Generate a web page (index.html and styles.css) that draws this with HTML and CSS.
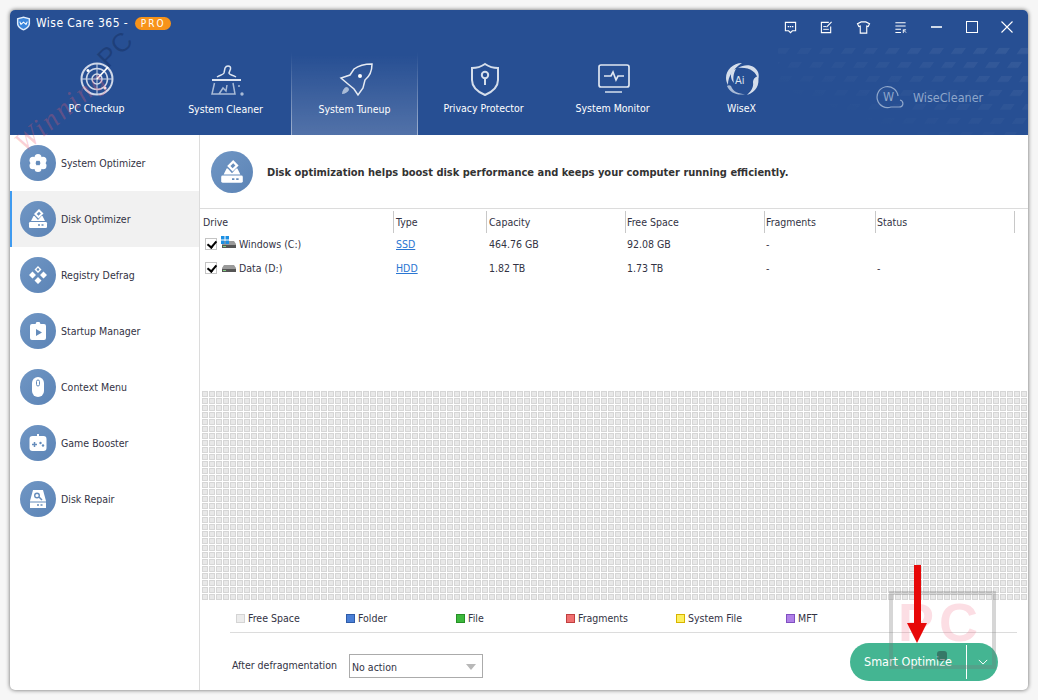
FILE: index.html
```html
<!DOCTYPE html>
<html lang="en">

<head>
    <meta charset="UTF-8">
    <meta name="viewport" content="width=device-width, initial-scale=1.0">
    <title>Wise Care 365</title>
    <link rel="stylesheet" href="styles.css">
</head>

<body>
    <div class="window">
        <header class="topbar">
            <svg class="topbar-pattern" viewBox="0 0 250 90">
                <defs>
                    <pattern id="dots" width="22" height="14" patternUnits="userSpaceOnUse" patternTransform="skewX(-35)">
                        <path d="M3 3h11v6H3z" fill="#fff"/>
                    </pattern>
                    <linearGradient id="fade" x1="0" y1="1" x2="1" y2="0">
                        <stop offset="0.2" stop-color="#fff" stop-opacity="0"/>
                        <stop offset="1" stop-color="#fff" stop-opacity="0.07"/>
                    </linearGradient>
                    <mask id="fadeMask"><rect width="250" height="90" fill="url(#fade)"/></mask>
                </defs>
                <rect width="250" height="90" fill="url(#dots)" mask="url(#fadeMask)"/>
            </svg>
            <div class="title-row">
                <svg class="logo" viewBox="0 0 16 16"><path d="M8 .500l7 2v5.500c0 3.500-3 6-7 7.500-4-1.500-7-4-7-7.500V2.500z" fill="#e3eefb"/><path d="M2.500 3.500L8 2l5.500 1.500V8c0 2.700-2.500 4.600-5.500 5.900C5 12.600 2.500 10.700 2.500 8z" fill="#3b86dc"/><path d="M4 6l1.300 3L8 6.500 10.700 9 12 6" fill="none" stroke="#fff" stroke-width="1.100"/></svg>
                <span class="app-name">Wise Care 365 -</span>
                <span class="pro-badge">PRO</span>
                <div class="win-tools">
                    <svg class="tool" viewBox="0 0 14 14"><path d="M1.500 1.500h11v9H9l-2 2-2-2H1.500z" fill="none" stroke="#fff" stroke-width="1.200"/><path d="M4 6h1.500M6.300 6h1.500M8.600 6h1.500" stroke="#fff" stroke-width="1.500"/></svg>
                    <svg class="tool" viewBox="0 0 14 14"><path d="M9.500 1.500h-8v11h10V6" fill="none" stroke="#fff" stroke-width="1.200"/><path d="M3.500 6h3M3.500 9h6" stroke="#fff"/><path d="M7 6.500l5.500-5.500" stroke="#fff" stroke-width="1.200"/></svg>
                    <svg class="tool tool-wide" viewBox="0 0 16 14"><path d="M5.500 1h5l4 2-1.500 3-1.500-.5v7.500h-7V5.500L3 6 1.500 3z" fill="none" stroke="#fff" stroke-width="1.200"/></svg>
                    <svg class="tool" viewBox="0 0 14 14"><path d="M1.500 2h11M1.500 5.500h11M1.500 9h6M1.500 12.500h6" stroke="#fff" stroke-width="1.100"/><path d="M10 13V9.500h3M10 9.500l3 3" fill="none" stroke="#fff"/></svg>
                    <span class="win-min"></span>
                    <span class="win-max"></span>
                    <svg class="win-close" viewBox="0 0 12 12"><path d="M.5.500l11 11M11.500.500l-11 11" stroke="#fff" stroke-width="1.100"/></svg>
                </div>
            </div>
            <nav class="tabs">
                <div class="tab">
                    <svg class="tab-icon" viewBox="0 0 36 36" fill="none" stroke="#cfd8e8" stroke-width="1.500">
                        <circle cx="18" cy="18" r="15.500" stroke-width="2"/><circle cx="18" cy="18" r="10.500"/><circle cx="18" cy="18" r="5"/>
                        <path d="M18 3v30M3 18h30" stroke-width="1"/><path d="M18 18L29 6" stroke="#fff" stroke-width="1.800"/>
                        <circle cx="26" cy="27" r="1.500" fill="#fff" stroke="none"/><circle cx="9" cy="9.500" r="1.500" fill="#fff" stroke="none"/>
                    </svg>
                    <span class="tab-label">PC Checkup</span>
                </div>
                <div class="tab">
                    <svg class="tab-icon" viewBox="0 0 36 36" fill="none" stroke="#dfe6f1" stroke-width="1.500">
                        <path d="M9 16c3-2 6-2 7-4l1-5q1-2 3-2 3 0 2.500 3L21 12c0 2 4 2 7 4"/><path d="M4 19h29" stroke-width="1.800"/>
                        <path d="M6.500 22L4 33h23l-2-11M11 33l4-6 3 3 1-6" stroke="#a9bbd6"/><circle cx="34" cy="33" r="1.700" fill="#a9bbd6" stroke="none"/><circle cx="31" cy="25" r="1" fill="#a9bbd6" stroke="none"/>
                    </svg>
                    <span class="tab-label label-low">System Cleaner</span>
                </div>
                <div class="tab tab-active">
                    <svg class="tab-icon" viewBox="0 0 36 36" fill="none" stroke="#e6ebf3" stroke-width="1.500">
                        <path d="M35 3c-7 0-14 2-18 5l-4 6-9 3 7 6 6 5 4 6 5-7 2-8c5-4 7-10 7-16z"/><circle cx="23" cy="15" r="2" fill="#fff" stroke="none"/>
                        <path d="M9 26c-2 1-4 4-4 7 3 0 6-2 7-4 0-2-1-3-3-3z" fill="#a9bbd6" stroke="none"/>
                    </svg>
                    <span class="tab-label label-low">System Tuneup</span>
                </div>
                <div class="tab">
                    <svg class="tab-icon" viewBox="0 0 36 36" fill="none" stroke="#d5deeb" stroke-width="2">
                        <path d="M19 3c3 2 8 4 13 4v12c0 7-6 12-13 15C12 31 6 26 6 19V7c5 0 10-2 13-4z"/><circle cx="19" cy="14" r="3.200"/><path d="M19 17v7"/>
                    </svg>
                    <span class="tab-label">Privacy Protector</span>
                </div>
                <div class="tab">
                    <svg class="tab-icon" viewBox="0 0 36 36" fill="none" stroke="#dfe6f1" stroke-width="1.700">
                        <rect x="4" y="4" width="30" height="22" rx="2"/><path d="M9 15h7l2-4 3 8 2-4h6"/><path d="M10 31h17" stroke-width="2" stroke="#a9bbd6"/>
                    </svg>
                    <span class="tab-label">System Monitor</span>
                </div>
                <div class="tab">
                    <svg class="tab-icon" viewBox="0 0 36 36" fill="#d5deeb">
                        <path d="M18 2C9 2 2 9 2 17c0 3 1 5 2 7 0-9 5-16 14-22z"/>
                        <path d="M14 7c8-5 17-3 20 4 1 3 1 5 0 7-2-7-8-12-20-11z"/>
                        <path d="M34 15c2 9-2 16-11 19 3-3 7-7 6-13 0-3 2-5 5-6z"/>
                        <path d="M3 25c3 7 11 10 18 8-6 0-12-2-14-8-1-1-3-1-4 0z" fill="#a9bbd6"/>
                        <path d="M8 9c-2 5-1 10 2 13-1-4-1-9 2-14z"/>
                    </svg>
                    <span class="ai-mark">Ai</span>
                    <span class="tab-label">WiseX</span>
                </div>
            </nav>
            <div class="brand">
                <svg class="brand-icon" viewBox="0 0 28 26" fill="none" stroke="#8ea6ca" stroke-width="1.200"><path d="M22 12A10.500 10.500 0 1 0 15 23h8c5 0 5-6 1-7"/></svg>
                <span class="brand-w">W</span>
                <span class="brand-name">WiseCleaner</span>
            </div>
        </header>

        <div class="content">
            <aside class="sidebar">
                <div class="side-item">
                    <span class="side-icon"><svg viewBox="0 0 20 20" fill="#fff"><circle cx="10" cy="4.500" r="3.500"/><circle cx="15" cy="7.300" r="3.500"/><circle cx="15" cy="12.700" r="3.500"/><circle cx="10" cy="15.500" r="3.500"/><circle cx="5" cy="12.700" r="3.500"/><circle cx="5" cy="7.300" r="3.500"/><circle cx="10" cy="10" r="2.200" fill="#658cbb"/></svg></span>
                    <span>System Optimizer</span>
                </div>
                <div class="side-item side-active">
                    <span class="side-icon"><svg viewBox="0 0 20 20"><path d="M11 0l4.500 4.500L10.500 9.500 6 5z" fill="#fff"/><path d="M11 2.700l1.800 1.800-2.300 2.300-1.800-1.800z" fill="#658cbb"/><path d="M5.500 7L3 12h14l-2.500-5-1 0-3.500 4-3.500-4z" fill="#fff"/><rect x="1" y="13" width="18" height="6" rx="1.200" fill="#fff"/><path d="M10 16h2M13.500 16h2" stroke="#658cbb" stroke-width="1.500"/></svg></span>
                    <span>Disk Optimizer</span>
                </div>
                <div class="side-item">
                    <span class="side-icon"><svg viewBox="0 0 20 20" fill="#fff"><path d="M10 1l3.500 3.500L10 8 6.500 4.500zM4.500 6.500L8 10l-3.500 3.500L1 10zM15.500 6.500L19 10l-3.500 3.500L12 10zM10 12l3.500 3.500L10 19l-3.500-3.500z"/><circle cx="10" cy="4.500" r="1.300" fill="#658cbb"/></svg></span>
                    <span>Registry Defrag</span>
                </div>
                <div class="side-item">
                    <span class="side-icon"><svg viewBox="0 0 20 20"><path d="M4 3h3.500l1-2h3l1 2H16a2 2 0 0 1 2 2v12a2 2 0 0 1-2 2H4a2 2 0 0 1-2-2V5a2 2 0 0 1 2-2z" fill="#fff"/><path d="M8 8l6 3.500L8 15z" fill="#658cbb"/></svg></span>
                    <span>Startup Manager</span>
                </div>
                <div class="side-item">
                    <span class="side-icon"><svg viewBox="0 0 20 20"><rect x="4" y="0" width="12" height="20" rx="6" fill="#fff"/><rect x="8.500" y="3" width="3" height="6" rx="1.500" fill="none" stroke="#658cbb"/></svg></span>
                    <span>Context Menu</span>
                </div>
                <div class="side-item">
                    <span class="side-icon"><svg viewBox="0 0 20 20"><path d="M9 1h2v2h4.500a3 3 0 0 1 3 3v9a3 3 0 0 1-3 3h-11a3 3 0 0 1-3-3V6a3 3 0 0 1 3-3H9z" fill="#fff"/><path d="M4 11.500h5M6.500 9v5" stroke="#658cbb" stroke-width="1.500"/><circle cx="12.500" cy="10" r="1.200" fill="#658cbb"/><circle cx="15" cy="12.500" r="1.200" fill="#658cbb"/></svg></span>
                    <span>Game Booster</span>
                </div>
                <div class="side-item">
                    <span class="side-icon"><svg viewBox="0 0 20 20"><path d="M5 1h10l3 11v7H2v-7z" fill="#fff"/><circle cx="9" cy="6.500" r="2.300" fill="none" stroke="#658cbb" stroke-width="1.400"/><path d="M11 8l3 3" stroke="#658cbb" stroke-width="1.500"/><path d="M2 13h16" stroke="#658cbb"/><path d="M9 16h2M12.500 16h2" stroke="#658cbb" stroke-width="1.500"/></svg></span>
                    <span>Disk Repair</span>
                </div>
            </aside>

            <main class="main">
                <div class="intro">
                    <span class="side-icon intro-icon"><svg viewBox="0 0 20 20"><path d="M11 0l4.500 4.500L10.500 9.500 6 5z" fill="#fff"/><path d="M11 2.700l1.800 1.800-2.300 2.300-1.800-1.800z" fill="#658cbb"/><path d="M5.500 7L3 12h14l-2.500-5-1 0-3.500 4-3.500-4z" fill="#fff"/><rect x="1" y="13" width="18" height="6" rx="1.200" fill="#fff"/><path d="M10 16h2M13.500 16h2" stroke="#658cbb" stroke-width="1.500"/></svg></span>
                    <b class="intro-text">Disk optimization helps boost disk performance and keeps your computer running efficiently.</b>
                </div>

                <div class="drives">
                    <div class="drive-row drive-head">
                        <span class="col col-drive">Drive</span>
                        <span class="col col-type">Type</span>
                        <span class="col col-cap">Capacity</span>
                        <span class="col col-free">Free Space</span>
                        <span class="col col-frag">Fragments</span>
                        <span class="col col-status">Status</span>
                    </div>
                    <div class="drive-row">
                        <span class="col col-drive drive-name">
                            <span class="check"></span>
                            <span class="disk-wrap">
                                <svg class="win-flag" viewBox="0 0 8 8" fill="#1c8fe3"><path d="M0 0h3.500v3.500H0zM4.500 0H8v3.500H4.500zM0 4.500h3.500V8H0zM4.500 4.500H8V8H4.500z"/></svg>
                                <svg class="disk" viewBox="0 0 14 7"><path d="M2 0h10l2 3v4H0V3z" fill="#9a9a9a"/><path d="M0 4h14v3H0z" fill="#555"/><path d="M1 5.500h3" stroke="#7fd07f"/></svg>
                            </span>
                            Windows (C:)
                        </span>
                        <a class="col col-type link">SSD</a>
                        <span class="col col-cap">464.76 GB</span>
                        <span class="col col-free">92.08 GB</span>
                        <span class="col col-frag">-</span>
                        <span class="col col-status"></span>
                    </div>
                    <div class="drive-row">
                        <span class="col col-drive drive-name">
                            <span class="check"></span>
                            <span class="disk-wrap">
                                <svg class="disk" viewBox="0 0 14 7"><path d="M2 0h10l2 3v4H0V3z" fill="#9a9a9a"/><path d="M0 4h14v3H0z" fill="#555"/><path d="M1 5.500h3" stroke="#7fd07f"/></svg>
                            </span>
                            Data (D:)
                        </span>
                        <a class="col col-type link">HDD</a>
                        <span class="col col-cap">1.82 TB</span>
                        <span class="col col-free">1.73 TB</span>
                        <span class="col col-frag">-</span>
                        <span class="col col-status">-</span>
                    </div>
                </div>

                <div class="cluster-map"></div>

                <div class="legend">
                    <span class="key"><i class="swatch sw-free"></i>Free Space</span>
                    <span class="key"><i class="swatch sw-folder"></i>Folder</span>
                    <span class="key"><i class="swatch sw-file"></i>File</span>
                    <span class="key"><i class="swatch sw-frag"></i>Fragments</span>
                    <span class="key"><i class="swatch sw-sys"></i>System File</span>
                    <span class="key"><i class="swatch sw-mft"></i>MFT</span>
                </div>

                <div class="actions">
                    <span class="after-label">After defragmentation</span>
                    <div class="select">No action<i class="select-arrow"></i></div>
                    <div class="optimize-btn">
                        <span class="optimize-text">Smart Optimize</span>
                        <span class="optimize-more"><svg viewBox="0 0 12 7" width="10" height="6"><path d="M1 1l5 5 5-5" fill="none" stroke="#fff" stroke-width="1.200"/></svg></span>
                    </div>
                </div>
            </main>
        </div>

        <!-- overlays added on top of the screenshot -->
        <span class="mark-script">Winning</span>
        <span class="mark-pc">PC</span>
        <div class="mark-box"><span class="mark-letters">PC</span></div>
        <i class="mark-spot"></i>
        <svg class="red-arrow" viewBox="0 0 20 78"><path d="M7 0h7v58h6L10 78 0 58h7z" fill="#e70808"/></svg>
    </div>
</body>

</html>
```
FILE: styles.css
```css
* {
    box-sizing: border-box;
}

html,
body {
    margin: 0;
    height: 100%;
}

body {
    background: #f6f6f6;
    padding: 10px;
    font-family: "DejaVu Sans", "Liberation Sans", sans-serif;
    font-stretch: condensed;
    font-size: 10.5px;
    color: #333344;
    overflow: hidden;
}

.window {
    position: relative;
    width: 1018px;
    height: 680px;
    display: flex;
    flex-direction: column;
    background: white;
    border-radius: 5px;
    box-shadow: 0 0 4px rgba(0, 0, 0, 0.6);
    overflow: hidden;
}

/* Top bar */
.topbar {
    position: relative;
    height: 125px;
    background: #274f93;
    color: white;
    flex: none;
}

.topbar-pattern {
    position: absolute;
    right: 0;
    bottom: 0;
    width: 250px;
    height: 90px;
}

.title-row {
    position: relative;
    display: flex;
    align-items: center;
    height: 28px;
    padding: 0 15px 2px 6px;
}

.logo {
    width: 15px;
    height: 15px;
    margin-right: 5px;
}

.app-name {
    font-size: 12px;
    letter-spacing: 0.45px;
}

.pro-badge {
    margin-left: 7px;
    width: 36px;
    height: 13px;
    line-height: 13px;
    background: #f7931a;
    border-radius: 7px;
    text-align: center;
    font-size: 10px;
    letter-spacing: 2px;
}

.win-tools {
    margin-left: auto;
    margin-top: 8px;
    display: flex;
    align-items: center;
}

.tool {
    width: 13px;
    height: 13px;
    margin-right: 23px;
}

.tool-wide {
    width: 15px;
}

.win-min {
    width: 11px;
    height: 2px;
    background: #cfd9e8;
    margin: 0 24px 0 1px;
}

.win-max {
    width: 12px;
    height: 12px;
    border: 1px solid white;
    margin-right: 23px;
}

.win-close {
    width: 12px;
    height: 12px;
}

.tabs {
    position: relative;
    display: flex;
    padding-left: 22px;
}

.tab {
    position: relative;
    width: 129px;
    height: 97px;
    display: flex;
    flex-direction: column;
    align-items: center;
    padding-top: 23px;
}

.tab-active {
    width: 127px;
    margin: 0 1px;
    background: linear-gradient(rgba(255, 255, 255, 0) 17px, rgba(255, 255, 255, 0.2));
    border-left: 1px solid;
    border-right: 1px solid;
    border-image: linear-gradient(rgba(255, 255, 255, 0) 15%, rgba(255, 255, 255, 0.45)) 1;
}

.tab-icon {
    width: 36px;
    height: 36px;
}

.tab-label {
    margin-top: 5px;
    font-size: 10.5px;
}

.label-low {
    margin-top: 6px;
}

.ai-mark {
    position: absolute;
    top: 36px;
    left: 58px;
    font-size: 11px;
    color: #dfe6f1;
}

.brand {
    position: absolute;
    left: 866px;
    top: 74px;
    display: flex;
    align-items: center;
    color: #8ea6ca;
    font-size: 12.5px;
}

.brand-icon {
    width: 28px;
    height: 26px;
    margin-right: 9px;
}

.brand-w {
    position: absolute;
    left: 7px;
    top: 5px;
}

/* Sidebar */
.content {
    flex: 1;
    display: flex;
    min-height: 0;
}

.sidebar {
    width: 190px;
    flex: none;
    border-right: 1px solid #dcdcdc;
}

.side-item {
    height: 56px;
    display: flex;
    align-items: center;
    padding-left: 10px;
    gap: 5px;
}

.side-active {
    background: #f1f1f1;
    border-left: 2px solid #3f9bf0;
    padding-left: 8px;
}

.side-icon {
    width: 36px;
    height: 36px;
    border-radius: 50%;
    background: linear-gradient(135deg, #7096c4, #5c84b6);
    display: flex;
    align-items: center;
    justify-content: center;
    flex: none;
}

.side-icon svg {
    width: 20px;
    height: 20px;
}

/* Main panel */
.main {
    flex: 1;
    display: flex;
    flex-direction: column;
    min-width: 0;
}

.intro {
    height: 74px;
    display: flex;
    align-items: center;
    padding-left: 11px;
    border-bottom: 1px solid #dcdcdc;
}

.intro-icon {
    width: 42px;
    height: 42px;
}

.intro-icon svg {
    width: 24px;
    height: 24px;
}

.intro-text {
    margin: 2px 0 0 14px;
    font-size: 11px;
    color: #333333;
}

.drives {
    height: 182px;
    flex: none;
}

.drive-row {
    display: flex;
    height: 24px;
    align-items: center;
}

.drive-head {
    height: 23px;
    padding-top: 2px;
    align-items: flex-start;
}

.drive-head .col {
    height: 22px;
    line-height: 22px;
    border-right: 1px solid #c8c8c8;
}

.col {
    display: block;
    flex: none;
}

.col-drive {
    width: 194px;
    padding-left: 3px;
}

.col-type {
    width: 93px;
    padding-left: 2px;
}

.col-cap {
    width: 139px;
    padding-left: 2px;
}

.col-free {
    width: 139px;
    padding-left: 1px;
}

.col-frag {
    width: 111px;
    padding-left: 1px;
}

.col-status {
    width: 139px;
    padding-left: 1px;
}

.drive-name {
    display: flex;
    align-items: center;
    padding-left: 5px;
}

.check {
    position: relative;
    width: 12px;
    height: 12px;
    border: 1px solid #c4c4c4;
    margin-right: 4px;
}

.check::after {
    content: "";
    position: absolute;
    left: 3px;
    top: 0;
    width: 4px;
    height: 7px;
    border: solid black;
    border-width: 0 2px 2px 0;
    transform: rotate(40deg);
}

.disk-wrap {
    position: relative;
    width: 14px;
    height: 7px;
    margin: 0 3px 0 1px;
}

.disk {
    display: block;
    width: 14px;
    height: 7px;
}

.win-flag {
    position: absolute;
    left: -1px;
    top: -5px;
    width: 8px;
    height: 8px;
}

.link {
    color: #2a76d2;
    text-decoration: underline;
}

/* Cluster map: one tile is a 6px cell with a 1px white gap */
.cluster-map {
    height: 209px;
    flex: none;
    margin-left: 2px;
    background-color: #e8e8e8;
    background-image:
        linear-gradient(90deg, transparent 6px, white 6px),
        linear-gradient(transparent 6px, white 6px),
        linear-gradient(90deg, #d6d6d6 1px, transparent 1px, transparent 5px, #d6d6d6 5px),
        linear-gradient(#d6d6d6 1px, transparent 1px, transparent 5px, #d6d6d6 5px);
    background-size: 7px 7px;
}

.legend {
    display: flex;
    height: 33px;
    margin: 0 11px 0 30px;
    padding: 11px 0 0 6px;
    border-bottom: 1px solid #dcdcdc;
    flex: none;
}

.key {
    display: flex;
    align-items: center;
    width: 110px;
    height: 14px;
}

.swatch {
    width: 9px;
    height: 9px;
    margin-right: 3px;
    border: 1px solid;
}

.sw-free {
    background: #ececec;
    border-color: #d4d4d4;
}

.sw-folder {
    background: #4a7fd6;
    border-color: #2f5ca8;
}

.sw-file {
    background: #3cb83c;
    border-color: #269026;
}

.sw-frag {
    background: #f07070;
    border-color: #c04040;
}

.sw-sys {
    background: #fdf060;
    border-color: #d8b400;
}

.sw-mft {
    background: #b080e8;
    border-color: #8050c0;
}

.actions {
    flex: 1;
    display: flex;
    align-items: center;
    padding: 0 30px 0 32px;
}

.after-label {
    width: 117px;
    margin-top: 7px;
}

.select {
    position: relative;
    width: 134px;
    height: 24px;
    line-height: 24px;
    margin-top: 8px;
    border: 1px solid #ababab;
    padding-left: 2px;
}

.select-arrow {
    position: absolute;
    right: 6px;
    top: 9px;
    border: 5px solid transparent;
    border-top: 6px solid #b8b8b8;
    border-bottom: none;
}

.optimize-btn {
    margin-left: auto;
    width: 148px;
    height: 38px;
    border-radius: 19px;
    background: #44b592;
    color: white;
    display: flex;
    align-items: center;
}

.optimize-text {
    width: 116px;
    text-align: center;
    font-size: 12.5px;
}

.optimize-more {
    flex: 1;
    height: 34px;
    border-left: 1px solid white;
    display: flex;
    align-items: center;
    justify-content: center;
}

/* Watermarks and the red arrow */
.mark-script {
    position: absolute;
    left: 18px;
    top: 118px;
    font-family: "Liberation Serif", serif;
    font-style: italic;
    font-stretch: normal;
    font-size: 28px;
    line-height: 30px;
    letter-spacing: 2.5px;
    transform-origin: left bottom;
    transform: rotate(-40deg);
    color: rgba(240, 90, 110, 0.28);
    pointer-events: none;
}

.mark-pc {
    position: absolute;
    left: 86px;
    top: 26px;
    font-family: "Liberation Sans", sans-serif;
    font-stretch: normal;
    font-size: 26px;
    line-height: 26px;
    letter-spacing: 1px;
    transform: rotate(-45deg);
    color: rgba(15, 35, 75, 0.35);
    pointer-events: none;
}

.mark-box {
    position: absolute;
    left: 879px;
    top: 581px;
    width: 107px;
    height: 78px;
    border: 4px solid rgba(120, 120, 120, 0.3);
    pointer-events: none;
}

.mark-letters {
    position: absolute;
    left: 5px;
    top: 6px;
    font-family: "Liberation Sans", sans-serif;
    font-stretch: normal;
    font-weight: bold;
    font-size: 54px;
    line-height: 42px;
    letter-spacing: 5px;
    color: rgba(240, 90, 120, 0.2);
}

.mark-spot {
    position: absolute;
    left: 927px;
    top: 641px;
    width: 10px;
    height: 10px;
    border-radius: 3px;
    background: rgba(40, 60, 60, 0.5);
}

.red-arrow {
    position: absolute;
    left: 897px;
    top: 555px;
    width: 20px;
    height: 78px;
}
```
